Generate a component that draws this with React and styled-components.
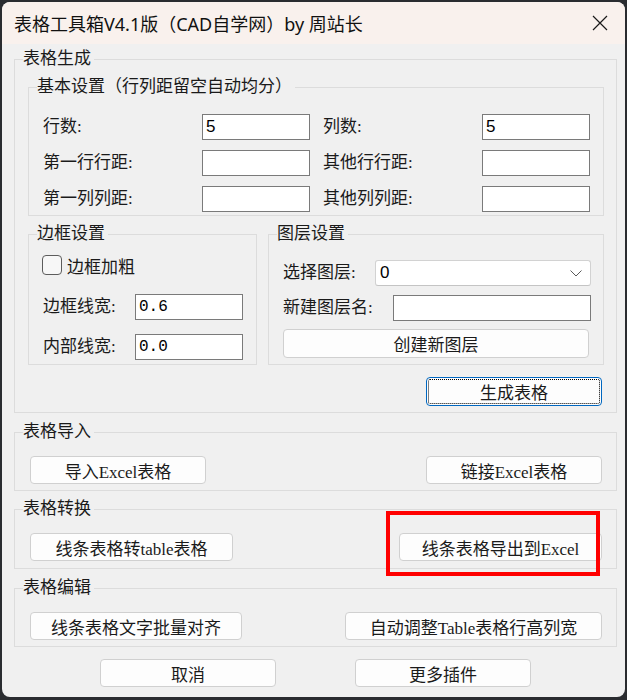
import React from "react";
import styled, { createGlobalStyle } from "styled-components";

const FONT = `"Liberation Serif", "Noto Sans CJK SC", serif`;

const GlobalStyle = createGlobalStyle`
  html, body { margin: 0; padding: 0; background: #2a2c30; }
  body { font-family: ${FONT}; }
  * { box-sizing: border-box; }
`;

const Screen = styled.div`
  width: 627px;
  height: 700px;
  padding: 2px 2px 3px 2px;
  background: #2a2c30;
`;

const Window = styled.div`
  width: 623px;
  height: 695px;
  display: flex;
  flex-direction: column;
  background: #f0f0f0;
  border-radius: 8px;
  overflow: hidden;
`;

const TitleBar = styled.div`
  height: 42px;
  flex-shrink: 0;
  display: flex;
  align-items: center;
  justify-content: space-between;
  padding-left: 12px;
  background: #f9f1ed;
`;

const Title = styled.div`
  font-family: "Noto Sans", "Noto Sans CJK SC", sans-serif;
  font-size: 18px;
  color: #111;
  white-space: nowrap;
`;

const CloseButton = styled.div`
  width: 44px;
  height: 42px;
  margin-right: 3px;
  display: flex;
  align-items: center;
  justify-content: center;
`;

const Body = styled.div`
  flex: 1;
  display: flex;
  flex-direction: column;
  padding: 5px 8px 10px 12px;
`;

const Group = styled.fieldset`
  margin: ${(p) => p.$mt || 0}px 0 0 0;
  padding: 0;
  min-width: 0;
  border: 1px solid #dcdcdc;
  flex: ${(p) => (p.$grow ? 1 : "none")};
  width: ${(p) => (p.$w ? `${p.$w}px` : "auto")};
`;

const Legend = styled.legend`
  margin-left: 8px;
  padding: 0 3px 0 0;
  font-size: 17px;
  line-height: 20px;
  color: #1a1a1a;
  white-space: nowrap;
`;

const Stack = styled.div`
  display: flex;
  flex-direction: column;
  padding: ${(p) => p.$pad};
  gap: ${(p) => p.$gap || 0}px;
`;

const FieldRow = styled.div`
  display: flex;
  gap: 13px;
`;

const Field = styled.div`
  display: flex;
  align-items: center;
  margin-top: ${(p) => p.$mt || 0}px;
`;

const Label = styled.span`
  width: ${(p) => p.$w}px;
  flex-shrink: 0;
  font-size: 17px;
  line-height: 26px;
  color: #1a1a1a;
  white-space: nowrap;
`;

const TextInput = styled.input`
  width: ${(p) => p.$w}px;
  height: 26px;
  margin: 0;
  padding: 0 3px;
  border: 1px solid #7a7a7a;
  border-radius: 0;
  background: #fff;
  color: #000;
  font-family: ${(p) => (p.$mono ? `"Liberation Mono", monospace` : `"Liberation Sans", sans-serif`)};
  font-size: ${(p) => (p.$mono ? 16 : 17)}px;
  outline: none;
`;

const SubRow = styled.div`
  display: flex;
  gap: 11px;
  margin-top: 8px;
  align-items: stretch;
`;

const CheckRow = styled.label`
  display: flex;
  align-items: center;
  gap: 5px;
  height: 20px;
  font-size: 17px;
  color: #1a1a1a;
  margin-left: -1px;
  margin-bottom: 5px;
`;

const CheckBox = styled.input`
  appearance: none;
  width: 20px;
  height: 20px;
  margin: 0;
  border: 1px solid #5c5c5c;
  border-radius: 4px;
  background: #f7f7f7;
`;

const ComboBox = styled.div`
  width: 216px;
  height: 26px;
  display: flex;
  align-items: center;
  justify-content: space-between;
  padding: 0 8px 0 4px;
  border: 1px solid #d2d2d2;
  border-bottom-color: #c4c4c4;
  border-radius: 3px;
  background: #fff;
  font-family: "Liberation Sans", sans-serif;
  font-size: 17px;
  color: #000;
`;

const Button = styled.button`
  width: ${(p) => p.$w}px;
  height: ${(p) => p.$h || 28}px;
  margin: 0;
  padding: 0;
  background: #fdfdfd;
  border: 1px solid ${(p) => (p.$primary ? "#0067c0" : "#d0d0d0")};
  border-radius: 4px;
  font-family: ${FONT};
  font-size: 17px;
  color: #1a1a1a;
  white-space: nowrap;
  outline: ${(p) => (p.$primary ? "1px dotted #000" : "none")};
  outline-offset: -3px;
  align-self: ${(p) => p.$align || "auto"};
  margin-top: ${(p) => p.$mt || 0}px;
  margin-right: ${(p) => p.$mr || 0}px;
`;

const ButtonBar = styled.div`
  display: flex;
  justify-content: space-between;
  padding: 14px 14px ${(p) => p.$pb || 6}px 15px;
`;

const Marked = styled.div`
  position: relative;
`;

const RedMark = styled.div`
  position: absolute;
  left: -13px;
  top: -22px;
  right: 2px;
  bottom: -15px;
  border: 4px solid #f00;
  pointer-events: none;
`;

const FooterBar = styled.div`
  display: flex;
  gap: 79px;
  margin-top: 12px;
  padding-left: 86px;
`;

const CloseIcon = () => (
  <svg width="16" height="16" viewBox="0 0 16 16">
    <path d="M1 1 L15 15 M15 1 L1 15" stroke="#1a1a1a" strokeWidth="1.2" fill="none" />
  </svg>
);

const Chevron = () => (
  <svg width="12" height="7" viewBox="0 0 12 7">
    <path d="M0.5 0.5 L6 6 L11.5 0.5" stroke="#5a5a5a" strokeWidth="1" fill="none" />
  </svg>
);

export default function App() {
  return (
    <Screen>
      <GlobalStyle />
      <Window>
        <TitleBar>
          <Title>表格工具箱V4.1版（CAD自学网）by 周站长</Title>
          <CloseButton>
            <CloseIcon />
          </CloseButton>
        </TitleBar>
        <Body>
          <Group>
            <Legend>表格生成</Legend>
            <Stack $pad="0 12px 6px 13px">
              <Group $mt={8}>
                <Legend>基本设置（行列距留空自动均分）</Legend>
                <Stack $pad="17px 13px 3px 14px" $gap={10}>
                  <FieldRow>
                    <Field>
                      <Label $w={159}>行数:</Label>
                      <TextInput $w={108} defaultValue="5" />
                    </Field>
                    <Field>
                      <Label $w={159}>列数:</Label>
                      <TextInput $w={108} defaultValue="5" />
                    </Field>
                  </FieldRow>
                  <FieldRow>
                    <Field>
                      <Label $w={159}>第一行行距:</Label>
                      <TextInput $w={108} />
                    </Field>
                    <Field>
                      <Label $w={159}>其他行行距:</Label>
                      <TextInput $w={108} />
                    </Field>
                  </FieldRow>
                  <FieldRow>
                    <Field>
                      <Label $w={159}>第一列列距:</Label>
                      <TextInput $w={108} />
                    </Field>
                    <Field>
                      <Label $w={159}>其他列列距:</Label>
                      <TextInput $w={108} />
                    </Field>
                  </FieldRow>
                </Stack>
              </Group>
              <SubRow>
                <Group $w={229}>
                  <Legend>边框设置</Legend>
                  <Stack $pad="11px 12px 4px 14px" $gap={14}>
                    <CheckRow>
                      <CheckBox type="checkbox" />
                      边框加粗
                    </CheckRow>
                    <Field>
                      <Label $w={92}>边框线宽:</Label>
                      <TextInput $w={108} $mono defaultValue="0.6" />
                    </Field>
                    <Field>
                      <Label $w={92}>内部线宽:</Label>
                      <TextInput $w={108} $mono defaultValue="0.0" />
                    </Field>
                  </Stack>
                </Group>
                <Group $grow>
                  <Legend>图层设置</Legend>
                  <Stack $pad="16px 12px 6px 14px" $gap={8}>
                    <Field>
                      <Label $w={92}>选择图层:</Label>
                      <ComboBox>
                        <span>0</span>
                        <Chevron />
                      </ComboBox>
                    </Field>
                    <Field $mt={1}>
                      <Label $w={110}>新建图层名:</Label>
                      <TextInput $w={198} />
                    </Field>
                    <Button $w={306} $h={29}>创建新图层</Button>
                  </Stack>
                </Group>
              </SubRow>
              <Button $w={176} $h={29} $primary $align="flex-end" $mt={12} $mr={2}>
                生成表格
              </Button>
            </Stack>
          </Group>

          <Group $mt={9}>
            <Legend>表格导入</Legend>
            <ButtonBar>
              <Button $w={176}>导入Excel表格</Button>
              <Button $w={176}>链接Excel表格</Button>
            </ButtonBar>
          </Group>

          <Group $mt={8}>
            <Legend>表格转换</Legend>
            <ButtonBar $pb={7}>
              <Button $w={203}>线条表格转table表格</Button>
              <Marked>
                <Button $w={203}>线条表格导出到Excel</Button>
                <RedMark />
              </Marked>
            </ButtonBar>
          </Group>

          <Group $mt={9}>
            <Legend>表格编辑</Legend>
            <ButtonBar>
              <Button $w={212}>线条表格文字批量对齐</Button>
              <Button $w={257}>自动调整Table表格行高列宽</Button>
            </ButtonBar>
          </Group>

          <FooterBar>
            <Button $w={176}>取消</Button>
            <Button $w={176}>更多插件</Button>
          </FooterBar>
        </Body>
      </Window>
    </Screen>
  );
}
